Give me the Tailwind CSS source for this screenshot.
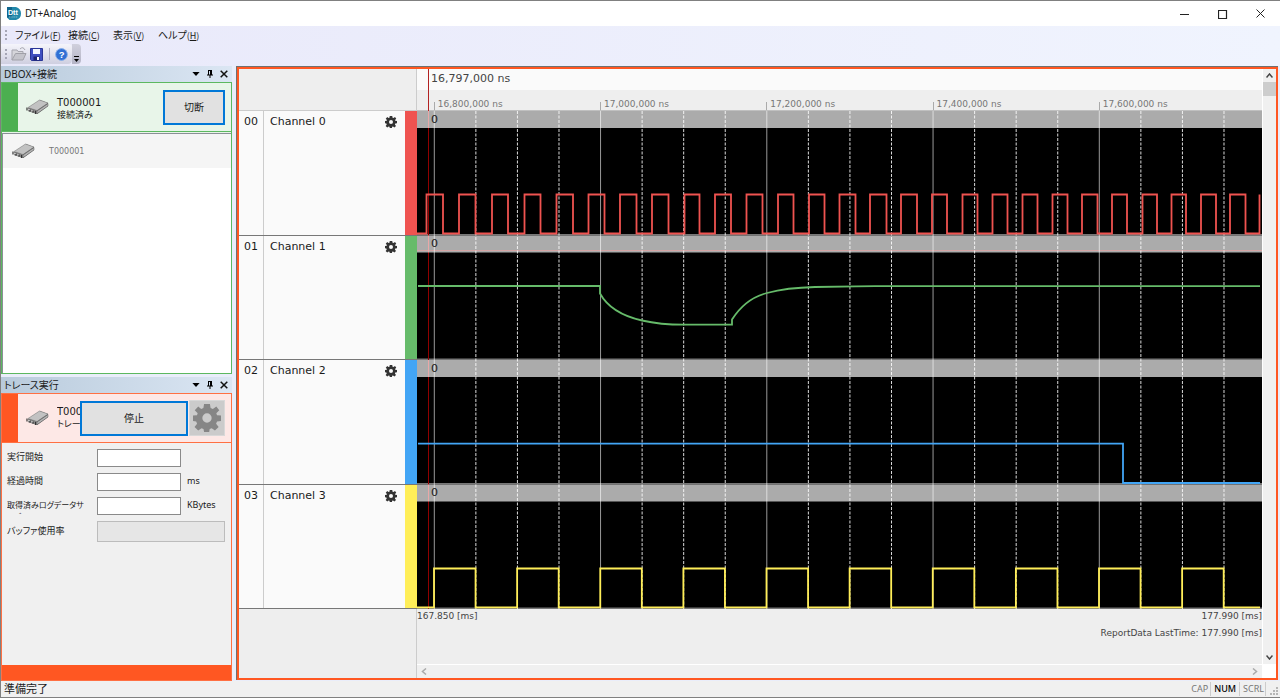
<!DOCTYPE html>
<html lang="ja">
<head>
<meta charset="utf-8">
<title>DT+Analog</title>
<script src="https://cdn.jsdelivr.net/npm/@tailwindcss/browser@4"></script>
</head>
<body class="h-screen overflow-hidden bg-[#f0f0f0] font-['Noto_Sans','Noto_Sans_CJK_JP',sans-serif] text-[#1a1a1a] text-[11px]">
<svg class="hidden" aria-hidden="true">
  <symbol id="gear" viewBox="0 0 24 24"><path fill-rule="evenodd" d="M9.500 0h5l.6 3.400 1.900.8L20 2.200 22.500 5.300 20 8l.6 1.600L24 9.800v4.700l-3.400.5-.8 1.900 2.200 2.900-3.200 3-2.800-2-1.700.7-.4 2.500H9.500L9 21.500l-1.700-.7-2.800 2-3.200-3 2.200-2.900-.8-1.900L0 14.500V9.800l3.400-.2L4 8 1.500 5.300 4.500 2.200 7 4.200l1.900-.8zM12 8a4 4 0 1 0 0 8 4 4 0 0 0 0-8z"/></symbol>
  <symbol id="device" viewBox="0 0 24 16">
    <path d="M2 9 14 1l8 3v3L11 15 2 12z" fill="#4a4a4a"/>
    <path d="M2 8.500 13.500 1 22 4 11 11.500z" fill="#c2c2c2" stroke="#8a8a8a" stroke-width=".6"/>
    <path d="M2 9l9 3v2.800L2 12z" fill="#909090"/>
    <path d="M11 12l11-7.500V7L11 14.800z" fill="#b4b4b4" stroke="#555" stroke-width=".5"/>
    <path d="M1 8.500v3M4 10.500v2M7 11.500v2M9.500 12v3" stroke="#333" stroke-width="1.200"/>
    <path d="M2.500 10.500h1M5.500 11.800h1" stroke="#fff" stroke-width="1"/>
  </symbol>
  <symbol id="tri" viewBox="0 0 9 5"><path d="M0 0h9L4.500 5z"/></symbol>
  <symbol id="pin" viewBox="0 0 8 8"><path d="M2 0h4v4.500h1v1H4.500V8h-1V5.500H1v-1h1zM3 1v3.500h1V1z" fill-rule="evenodd"/></symbol>
  <symbol id="cross" viewBox="0 0 8 8"><path d="M.7.7l6.600 6.600M7.300.7.7 7.300" stroke="#111" stroke-width="1.500"/></symbol>
</svg>

<div class="flex h-full flex-col border-b border-l border-t border-[#808080]">
  <header class="flex h-[25px] shrink-0 items-center bg-white pl-1.5">
    <svg class="h-[14px] w-[14px]" viewBox="0 0 14 14"><path d="M0 0h9q5 1.500 5 6.500t-5 6.500H2.500L0 10.500z" fill="#2188aa"/><path d="M0 0h5v10.500H0z" fill="#10658c"/><text x="1" y="7.500" font-size="7" font-weight="700" font-family="Liberation Sans" fill="#fff">Dtt</text><path d="M2 10h9" stroke="#7dbccf" stroke-dasharray="1.500 .7"/></svg>
    <h1 class="ml-1 flex-1 text-[10px]">DT+Analog</h1>
    <div class="mr-3 flex items-center gap-6">
      <button aria-label="最小化" class="flex h-4 w-[14px] items-center justify-center"><svg class="h-[10px] w-[10px]"><path d="M0 5.500h9" stroke="#222"/></svg></button>
      <button aria-label="最大化" class="flex h-4 w-[14px] items-center justify-center"><svg class="h-[10px] w-[10px]"><path d="M.5 1.500h8v8h-8z" fill="none" stroke="#222" stroke-width="1.200"/></svg></button>
      <button aria-label="閉じる" class="flex h-4 w-[14px] items-center justify-center"><svg class="h-[10px] w-[10px]"><path d="M.5.5l8 8M8.500.5l-8 8" stroke="#222"/></svg></button>
    </div>
  </header>

  <div class="h-10 shrink-0 bg-linear-to-r from-[#e9e9fa] to-[#f0f4fe]">
    <nav class="flex h-[18px] items-center gap-2 pl-1 font-['Noto_Sans_CJK_JP'] text-[10px] [font-feature-settings:'palt']">
      <span class="h-2.5 border-l-2 border-dotted border-[#a5a5b5]"></span>
      <button class="w-[45px] whitespace-nowrap text-left">ファイル<span class="text-[9px]">(<u>F</u>)</span></button>
      <button class="w-[37px] whitespace-nowrap text-left">接続<span class="text-[9px]">(<u>C</u>)</span></button>
      <button class="w-[37px] whitespace-nowrap text-left">表示<span class="text-[9px]">(<u>V</u>)</span></button>
      <button class="whitespace-nowrap">ヘルプ<span class="text-[9px]">(<u>H</u>)</span></button>
    </nav>
    <div class="flex h-5 w-20">
      <div class="flex w-[71px] items-center rounded-r bg-linear-to-b from-[#f5f5fb] to-[#cfcfe0] pl-1">
        <span class="mr-1 h-2.5 border-l-2 border-dotted border-[#a5a5b5]"></span>
        <button aria-label="開く"><svg class="h-4 w-4" viewBox="0 0 16 16"><path d="M1 14V4h5l1 1.500h5V8" fill="#d5d5da" stroke="#a5a5ad"/><path d="M1 14 4.500 7.500H15L12 14z" fill="#c4c4cb" stroke="#a0a0a8"/><path d="M9 3q3-3 5 1" fill="none" stroke="#a5a5ad"/></svg></button>
        <button aria-label="保存" class="ml-[3px]"><svg class="h-[13px] w-[13px]" viewBox="0 0 13 13"><path d="M.5.5h12v12h-11l-1-1z" fill="#3f4fc0" stroke="#2a3596"/><path d="M3 1h7v5H3z" fill="#f3f6ff"/><path d="M3.500 8.500h6v4h-6z" fill="#1d2570"/><path d="M7 9h2v3H7z" fill="#fff"/></svg></button>
        <span class="ml-1.5 h-3 border-l border-[#b0b0c4]"></span>
        <button aria-label="ヘルプ" class="ml-[5px]"><svg class="h-[13px] w-[13px]" viewBox="0 0 13 13"><circle cx="6.500" cy="6.500" r="5.900" fill="#2f6fd4" stroke="#8ab0ea"/><text x="3.700" y="10" font-size="9.500" font-weight="700" font-family="Liberation Sans" fill="#fff">?</text></svg></button>
      </div>
      <button aria-label="オプション" class="flex w-[9px] items-end justify-center rounded-r bg-linear-to-b from-[#d0d0dd] to-[#b4b4c6] pb-0.5"><svg class="h-[6px] w-[5px]"><path d="M0 .5h5" stroke="#000"/><path d="M0 3h5L2.500 6z"/></svg></button>
    </div>
  </div>

  <main class="flex min-h-0 flex-1 bg-[#e9edfa]">
    <aside class="mr-1 flex w-[231px] shrink-0 flex-col [font-feature-settings:'palt']">
      <div class="flex h-4 shrink-0 items-center bg-linear-to-r from-[#b9cbdc] to-[#dbe6f3] pl-[3px] pr-1">
        <h2 class="flex-1 text-[10px]">DBOX+接続</h2>
        <button aria-label="メニュー"><svg class="h-[4px] w-[8px]"><use href="#tri"/></svg></button>
        <button aria-label="固定" class="ml-1.5"><svg class="h-2 w-2"><use href="#pin"/></svg></button>
        <button aria-label="閉じる" class="ml-1.5"><svg class="h-2 w-2"><use href="#cross"/></svg></button>
      </div>
      <section class="flex min-h-0 flex-1 flex-col border border-[#5cb860] bg-[#e8f5e9]">
        <div class="flex h-[49px] shrink-0 items-center border-b border-[#5cb860] pr-1.5">
          <span class="h-full w-4 bg-[#4caf50]"></span>
          <svg class="ml-2 h-4 w-6"><use href="#device"/></svg>
          <div class="ml-[7px] flex-1">
            <p class="pt-0.5 font-['DejaVu_Sans'] text-[10px] leading-3">T000001</p>
            <p class="text-[9px] leading-[11px]">接続済み</p>
          </div>
          <button class="h-[35px] w-[62px] border-2 border-[#0078d7] bg-[#e1e1e1] text-[10px]">切断</button>
        </div>
        <div class="mt-px flex-1 border-l border-t border-[#8a8f96] bg-white">
          <div class="flex h-[34px] items-center bg-[#f5f5f5]">
            <svg class="ml-[9px] h-4 w-6"><use href="#device"/></svg>
            <span class="ml-[13px] pt-0.5 font-['DejaVu_Sans'] text-[8px] text-[#777]">T000001</span>
          </div>
        </div>
      </section>

      <div class="mt-[3px] flex h-4 shrink-0 items-center bg-linear-to-r from-[#b9cbdc] to-[#dbe6f3] pl-[3px] pr-1">
        <h2 class="flex-1 text-[10px]">トレース実行</h2>
        <button aria-label="メニュー"><svg class="h-[4px] w-[8px]"><use href="#tri"/></svg></button>
        <button aria-label="固定" class="ml-1.5"><svg class="h-2 w-2"><use href="#pin"/></svg></button>
        <button aria-label="閉じる" class="ml-1.5"><svg class="h-2 w-2"><use href="#cross"/></svg></button>
      </div>
      <section class="flex h-[288px] shrink-0 flex-col border border-[#ff7043] bg-[#f0f0f0]">
        <div class="flex h-[49px] shrink-0 items-center border-b border-[#ff7043] bg-[#fde8e6] pr-1.5">
          <span class="h-full w-4 shrink-0 bg-[#ff5722]"></span>
          <svg class="ml-2 h-4 w-6 shrink-0"><use href="#device"/></svg>
          <div class="ml-[7px] w-[23px] shrink-0 overflow-hidden whitespace-nowrap">
            <p class="font-['DejaVu_Sans'] text-[10px] leading-3">T000001</p>
            <p class="text-[9px] leading-3">トレース中</p>
          </div>
          <button class="h-[35px] flex-1 border-2 border-[#0078d7] bg-[#e1e1e1] text-[10px]">停止</button>
          <button aria-label="設定" class="ml-px flex h-9 w-9 items-center justify-center border border-[#d8d8d8] bg-[#cbcbcb]"><svg class="h-7 w-7 fill-[#868686]"><use href="#gear"/></svg></button>
        </div>
        <form class="flex-1 pl-[5px] pr-1.5 pt-1.5 text-[9px]">
          <div class="mb-1.5 flex h-[18px]"><label for="start" class="w-[90px] leading-4">実行開始</label><input id="start" class="w-[84px] border border-[#8a8a8a] bg-white"></div>
          <div class="mb-1.5 flex h-[18px]"><label for="elapsed" class="w-[90px] leading-4">経過時間</label><input id="elapsed" class="w-[84px] border border-[#8a8a8a] bg-white"><span class="ml-1.5 leading-4">ms</span></div>
          <div class="mb-1.5 flex h-[18px]"><label for="size" class="h-[17px] w-[90px] overflow-hidden pt-0.5 text-[8px] leading-3">取得済みログデータサ<br>イズ</label><input id="size" class="w-[84px] border border-[#8a8a8a] bg-white"><span class="ml-1.5 leading-4">KBytes</span></div>
          <div class="flex h-[21px]"><span class="w-[90px] leading-5">バッファ使用率</span><div role="progressbar" aria-label="バッファ使用率" class="flex-1 border border-[#bcbcbc] bg-[#e6e6e6]"></div></div>
        </form>
        <div class="h-[15px] bg-[#ff5722]"></div>
      </section>
    </aside>

    <section class="mb-px mr-0.5 flex min-w-0 flex-1 border-l border-t border-[#707070]">
      <div class="flex min-w-0 flex-1 border-2 border-[#ff5722] bg-[#eee] font-['DejaVu_Sans']">
        <div class="flex w-[178px] shrink-0 flex-col">
          <div class="h-[42px] border-b border-r border-[#ccc]"></div>
          <div id="channels" class="grid flex-1 grid-rows-4"></div>
          <div class="h-[69px] border-r border-[#ccc]"></div>
        </div>
        <div class="flex min-w-0 flex-1 flex-col">
          <div class="relative h-[42px] border-b border-[#c0c0c0]">
            <div class="h-[21px] bg-[#fafafa] pl-[14px] text-[11px] leading-[20px] text-[#444]">16,797,000 ns</div>
            <div id="ticks"></div>
            <i class="absolute top-0 h-[42px] w-px bg-[#b22222]" style="left:1.3%"></i>
          </div>
          <div class="relative flex-1">
            <svg id="plot" class="absolute h-full w-full" viewBox="417 111 845 498" preserveAspectRatio="none"></svg>
            <div class="absolute grid h-full grid-rows-4 pl-[14px] pt-px text-[11px] leading-4"><span>0</span><span>0</span><span>0</span><span>0</span></div>
          </div>
          <div class="flex h-[69px] flex-col text-[9px] text-[#444]">
            <div class="flex justify-between leading-[15px]"><span>167.850 [ms]</span><span>177.990 [ms]</span></div>
            <div class="flex-1 text-right leading-[18px]">ReportData LastTime: 177.990 [ms]</div>
            <div class="flex h-[14px] items-center justify-between border-t border-white bg-[#f0f0f0] px-1">
              <svg class="h-[7px] w-[6px]"><path d="M5 .5l-3.500 3L5 6.500" fill="none" stroke="#aaa" stroke-width="1.500"/></svg>
              <svg class="h-[7px] w-[6px]"><path d="M1 .5l3.500 3L1 6.500" fill="none" stroke="#aaa" stroke-width="1.500"/></svg>
            </div>
          </div>
        </div>
        <div class="flex w-[14px] shrink-0 flex-col items-center border-l border-white bg-[#f0f0f0]">
          <svg class="my-1 h-[5px] w-[7px]"><path d="M.5 4.500l3-3.500 3 3.500" fill="none" stroke="#444" stroke-width="1.500"/></svg>
          <div class="h-[14px] w-full bg-[#cdcdcd]"></div>
          <div class="flex-1"></div>
          <svg class="my-1 h-[5px] w-[7px]"><path d="M.5.5l3 3.500 3-3.500" fill="none" stroke="#444" stroke-width="1.500"/></svg>
          <div class="h-[14px] w-full bg-white"></div>
        </div>
      </div>
    </section>
  </main>

  <footer class="flex h-4 shrink-0 items-center bg-[#f0f0f0] pl-[3px] pr-0.5">
    <span class="flex-1">準備完了</span>
    <span class="border-r border-[#ccc] px-0.5 text-[9px] text-[#777]">CAP</span>
    <span class="border-r border-[#ccc] px-[3px] text-[9px] font-medium text-black">NUM</span>
    <span class="border-r border-[#ccc] px-px pl-[3px] text-[9px] text-[#777]">SCRL</span>
    <svg class="ml-1 mt-1 h-2 w-2"><path d="M6 0h2v2H6zM3 3h2v2H3zM6 3h2v2H6zM0 6h2v2H0zM3 6h2v2H3zM6 6h2v2H6z" fill="#b5b5b5"/></svg>
  </footer>
</div>

<script>
const colors = ['#ef5350', '#66bb6a', '#42a5f5', '#ffee58'];
document.getElementById('channels').innerHTML = colors.map((c, i) => `
  <div class="flex border-b border-[#777] bg-[#fafafa] text-[11px] leading-[22px]">
    <span class="w-[25px] border-r border-[#ccc] pl-[5px]">0${i}</span>
    <span class="flex-1 pl-1.5">Channel ${i}</span>
    <button aria-label="Channel ${i} 設定" class="mr-2 mt-[5px] h-3 w-3"><svg class="h-3 w-3 fill-[#333]"><use href="#gear"/></svg></button>
    <span class="w-3" style="background:${c}"></span>
  </div>`).join('');

const major = 166.25, first = 434.3;
document.getElementById('ticks').innerHTML = ['16,800,000', '17,000,000', '17,200,000', '17,400,000', '17,600,000'].map((t, i) =>
  `<span class="absolute bottom-0 h-2 whitespace-nowrap border-l border-[#aaa] pl-[3px] text-[9px] leading-[4px] text-[#777]" style="left:${(first - 417.5 + i * major) / 8.45}%">${t} ns</span>`).join('');

let s = '<rect x="417" y="111" width="845" height="498" fill="#000"/>';
const rowTop = i => 111 + 124.5 * i;
for (let i = 0; i < 4; i++) {
  s += `<rect x="417" y="${rowTop(i)}" width="845" height="17" fill="#ababab"/>`;
  s += `<path d="M417 ${rowTop(i) + 123.8}H1262" stroke="#777" stroke-width="1.4"/>`;
}
s += '<path d="M417 250.500H1262" stroke="#d4a4a4"/>';
for (let i = 0; i < 20; i++) {
  const x = first + i * major / 4;
  s += i % 4 === 0
    ? `<path d="M${x} 111V609" stroke="#fff" stroke-opacity=".6"/>`
    : `<path d="M${x} 111V609" stroke="#fff" stroke-opacity=".85" stroke-dasharray="3 1.500"/>`;
}
s += '<path d="M428.500 111V609" stroke="#900000"/>';
for (let i = 0; i < 4; i++) s += `<path d="M428.500 ${rowTop(i)}v17" stroke="#e8a8a8"/>`;

const square = (edges, hi, lo, end) => `M417 ${lo}` + edges.map((x, i) => `H${x}V${i % 2 ? lo : hi}`).join('') + (end ? `H${end}` : '');
const red = [426.5,443,459,475.5,492,508,524.5,540.5,556.5,573,588.5,604.5,620,636.5,652,668.5,684.5,699.5,715,731,746.5,762.5,778,793.5,809,824.5,839.5,855.5,870,886.5,901,917,932,947,962.5,977.5,992.5,1007.5,1022.5,1037.5,1052.5,1067.5,1082,1097.5,1112,1127,1142.5,1157,1171.5,1186,1201,1216,1230,1245.5,1259.5];
const yellow = Array.from({length: 20}, (_, i) => first - .3 + i * major / 4);
const waves = [
  square(red, 194.5, 233.5),
  'M418 286H600V293.500C608 308 622 316 642 320.500C655 323.500 670 324.700 684 324.700H732V319.500C740 307 751 297 767 293C780 289.500 795 287.500 815 287C840 286.500 855 286.500 875 286.200H1260',
  'M418 443.700H1123V483H1260',
  square(yellow, 568.5, 607.3, 1260)
];
waves.forEach((d, i) => s += `<path d="${d}" fill="none" stroke="${colors[i]}" stroke-width="1.8"/>`);
document.getElementById('plot').innerHTML = s;
</script>
</body>
</html>
